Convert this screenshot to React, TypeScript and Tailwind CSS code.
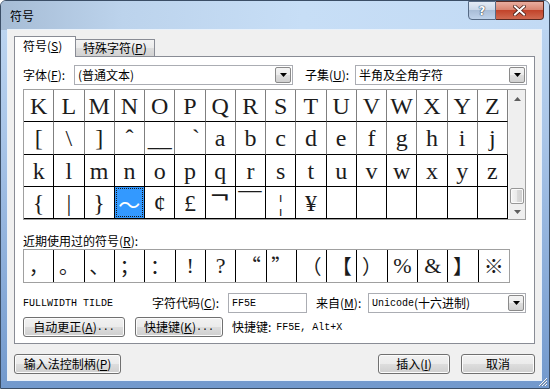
import React from 'react';

const CJK = "font-['Noto_Sans_CJK_SC',sans-serif]";
const MONO = "font-['Liberation_Mono',monospace]";
const SERIF = "font-['Liberation_Serif',serif]";

const BTN =
  'flex items-center justify-center h-[20px] rounded-[3px] border border-[#707070] bg-[linear-gradient(to_bottom,#f2f2f2,#ebebeb_50%,#dddddd_50%,#cfcfcf)] shadow-[inset_0_0_0_1px_#fcfcfc] text-[12px] text-black';

type Cell = { ch: string; cls?: string; font?: string };

const GRID: Cell[][] = [
  'KLMNOPQRSTUVWXYZ'.split('').map(ch => ({ ch })),
  [
    { ch: '[' }, { ch: '\\' }, { ch: ']' }, { ch: 'ˆ' }, { ch: '__' }, { ch: '`', cls: 'translate-x-[6px]' },
    ...'abcdefghij'.split('').map(ch => ({ ch })),
  ],
  'klmnopqrstuvwxyz'.split('').map(ch => ({ ch })),
  [
    { ch: '{' }, { ch: '|' }, { ch: '}' }, { ch: '～' }, { ch: '¢' }, { ch: '£' },
    { ch: '¬', cls: '-translate-y-[8px] scale-x-[1.4] font-bold' }, { ch: '¯', cls: '-translate-y-[2px] scale-x-[1.9]' },
    { ch: '¦' }, { ch: '¥' },
    { ch: '' }, { ch: '' }, { ch: '' }, { ch: '' }, { ch: '' }, { ch: '' },
  ],
];

const RECENT: Cell[] = [
  { ch: '，' }, { ch: '。' }, { ch: '、' }, { ch: '；' }, { ch: '：' },
  { ch: '!', font: 'serif' }, { ch: '?', font: 'serif' },
  { ch: '“' }, { ch: '”' }, { ch: '（' }, { ch: '【' }, { ch: '）' },
  { ch: '%', font: 'serif' }, { ch: '&', font: 'serif' }, { ch: '】' }, { ch: '※' },
];

function Mn({ k }: { k: string }) {
  return (
    <span>
      (<span className="underline underline-offset-[1px]">{k}</span>)
    </span>
  );
}

function DropBtn() {
  return (
    <div className="w-[16px] h-[16px] flex items-center justify-center rounded-[2px] border border-[#8a8a8a] bg-[linear-gradient(to_bottom,#f4f4f4,#ececec_50%,#dedede_50%,#d0d0d0)]">
      <svg width="7" height="4" viewBox="0 0 7 4">
        <path d="M0 0H7L3.5 4Z" fill="#000" />
      </svg>
    </div>
  );
}

function Combo({ w, children }: { w: string; children: React.ReactNode }) {
  return (
    <div className={`${w} h-[20px] flex items-center border border-[#abadb3] bg-white pl-[3px] pr-px`}>
      <div className="flex-1 flex items-center whitespace-nowrap overflow-hidden">{children}</div>
      <DropBtn />
    </div>
  );
}

function Arrow({ up }: { up?: boolean }) {
  return (
    <svg width="7" height="4" viewBox="0 0 7 4">
      <path d={up ? 'M0 4H7L3.5 0Z' : 'M0 0H7L3.5 4Z'} fill="#5e5e5e" />
    </svg>
  );
}

export default function App() {
  return (
    <div className={`w-[550px] h-[389px] bg-white overflow-hidden ${CJK} text-[12px] text-black`}>
      <div className="relative w-full h-full flex flex-col rounded-t-[6px] border border-[#3b4e66] bg-[linear-gradient(to_bottom,#c0d8f2,#a9c5e8_35%,#7299cd)]">
        {/* Title bar */}
        <div className="h-[29px] flex rounded-t-[5px] bg-[linear-gradient(to_right,#a6bcd5,#bcd3ec_22%,#c7def6_55%,#c2daf4)]">
          <span className="ml-[9px] self-center text-[12px] leading-none">符号</span>
          <div className="ml-auto mr-[5px] flex h-[19px]">
            <div className="w-[28px] h-full rounded-bl-[4px] border border-[#566a85] bg-[linear-gradient(to_bottom,#e4ecf6,#cbd9ea_45%,#a9bdd7_50%,#bfd2ea)] flex items-center justify-center">
              <span className="font-['DejaVu_Sans',sans-serif] text-[12px] font-bold leading-none text-white [text-shadow:0_0_1px_#34465e,0_0_1px_#34465e,0_0_1px_#34465e]">?</span>
            </div>
            <div className="w-[48px] h-full rounded-br-[4px] border border-l-0 border-[#5a2a22] bg-[linear-gradient(to_bottom,#e9ad9f,#d98672_45%,#c2442b_50%,#d06a51)] flex items-center justify-center">
              <svg width="13" height="11" viewBox="0 0 13 11">
                <path d="M2 1.5L11 9.5M11 1.5L2 9.5" stroke="#4a1f18" strokeWidth="3.6" strokeLinecap="square" />
                <path d="M2 1.5L11 9.5M11 1.5L2 9.5" stroke="#ffffff" strokeWidth="2" strokeLinecap="square" />
              </svg>
            </div>
          </div>
        </div>

        {/* Client area */}
        <div className="ml-[7px] w-[533px] h-[350px] flex flex-col bg-[#f0f0f0] shadow-[0_0_0_1px_#e9f1fa]">
          {/* Tabs */}
          <div className="relative z-10 flex items-end h-[21px] mt-[6px] ml-[6px] -mb-px">
            <div className="w-[62px] h-[21px] flex items-center pl-[8px] pb-[2px] bg-white border border-b-0 border-[#898c95]">
              符号<Mn k="S" />
            </div>
            <div className="w-[79px] h-[17px] mb-px flex items-center pl-[7px] border border-l-0 border-b-0 border-[#898c95] bg-[linear-gradient(to_bottom,#f3f3f3,#ebebeb_50%,#dddddd_50%,#d2d2d2)]">
              特殊字符<Mn k="P" />
            </div>
          </div>

          {/* Tab panel */}
          <div className="ml-[6px] w-[521px] h-[288px] flex flex-col pl-[8px] bg-white border border-[#898c95]">
            {/* Font / subset row */}
            <div className="mt-[8px] h-[20px] flex items-center">
              <span className="w-[51px]">字体<Mn k="F" />:</span>
              <Combo w="w-[219px]">(普通文本)</Combo>
              <span className="ml-[12px] w-[50px]">子集<Mn k="U" />:</span>
              <Combo w="w-[172px]">半角及全角字符</Combo>
            </div>

            {/* Symbol grid */}
            <div className="mt-[4px] w-[503px] h-[131px] flex border border-[#a0a0a0]">
              <div className="w-[484px] grid grid-cols-16">
                {GRID.map((row, r) =>
                  row.map((cell, c) => {
                    const sel = r === 3 && c === 3;
                    return (
                      <div
                        key={`${r}-${c}`}
                        className={`flex items-center justify-center border-r border-b border-b-black ${r < 2 ? 'border-r-[#7f7f7f]' : 'border-r-black'} ${r === 1 ? 'h-[33px]' : 'h-[32px]'} ${sel ? 'bg-[#3399ff] p-px' : ''}`}
                      >
                        {sel ? (
                          <div className="w-full h-full flex items-center justify-center border border-dotted border-[#1b1b1b]">
                            <span className={`${CJK} text-[22px] leading-none text-white`}>{cell.ch}</span>
                          </div>
                        ) : (
                          <span className={`${SERIF} text-[24px] leading-[32px] text-[#1c1c1c] ${cell.cls ?? ''}`}>{cell.ch}</span>
                        )}
                      </div>
                    );
                  })
                )}
              </div>
              {/* Scrollbar */}
              <div className="w-[17px] flex flex-col bg-[#efefef] border-l border-[#f7f7f7]">
                <div className="h-[17px] flex items-center justify-center">
                  <Arrow up />
                </div>
                <div className="flex-1" />
                <div className="mx-px h-[16px] rounded-[2px] border border-[#979797] bg-[linear-gradient(to_right,#f4f4f4,#e9e9e9_50%,#dadada_50%,#cdcdcd)] shadow-[inset_0_0_0_1px_#fafafa]" />
                <div className="h-[15px] flex items-center justify-center">
                  <Arrow />
                </div>
              </div>
            </div>

            {/* Recent symbols */}
            <div className="mt-[13px] h-[16px] leading-[16px]">
              近期使用过的符号<Mn k="R" />:
            </div>
            <div className="w-[487px] h-[34px] grid grid-cols-16 border border-[#a0a0a0]">
              {RECENT.map((cell, i) => (
                <div key={i} className={`flex items-center justify-center ${i < 15 ? 'border-r border-black' : ''}`}>
                  <span
                    className={
                      cell.font === 'serif'
                        ? `${SERIF} text-[22px] leading-none text-[#1c1c1c]`
                        : `${CJK} text-[20px] leading-none text-[#1c1c1c]`
                    }
                  >
                    {cell.ch}
                  </span>
                </div>
              ))}
            </div>

            {/* Name / code row */}
            <div className="mt-[10px] h-[20px] flex items-center">
              <span className={`${MONO} text-[10px] w-[129px]`}>FULLWIDTH TILDE</span>
              <span className="w-[76px]">字符代码<Mn k="C" />:</span>
              <div className={`w-[79px] h-[20px] flex items-center pl-[3px] border border-[#abadb3] bg-white ${MONO} text-[10px]`}>FF5E</div>
              <span className="ml-[9px] w-[52px]">来自<Mn k="M" />:</span>
              <Combo w="w-[158px]">
                <span className={`${MONO} text-[10px]`}>Unicode</span>
                <span>(十六进制)</span>
              </Combo>
            </div>

            {/* Buttons row */}
            <div className="mt-[4px] h-[20px] flex items-center">
              <button className={`${BTN} w-[102px]`}>
                自动更正<Mn k="A" />
                <span className={`${MONO} text-[10px]`}>...</span>
              </button>
              <button className={`${BTN} ml-[10px] w-[88px]`}>
                快捷键<Mn k="K" />
                <span className={`${MONO} text-[10px]`}>...</span>
              </button>
              <span className="ml-[9px]">快捷键:</span>
              <span className={`${MONO} text-[10px] ml-[5px]`}>FF5E, Alt+X</span>
            </div>
          </div>

          {/* Bottom buttons */}
          <div className="mt-[10px] h-[20px] flex items-center px-[6px]">
            <button className={`${BTN} w-[107px]`}>
              输入法控制柄<Mn k="P" />
            </button>
            <button className={`${BTN} ml-auto w-[72px] border-[#3c7fb1] shadow-[inset_0_0_0_1px_#bfe4f8]`}>
              插入<Mn k="I" />
            </button>
            <button className={`${BTN} ml-[11px] w-[74px]`}>取消</button>
          </div>
        </div>

        {/* Resize grip */}
        <svg className="absolute right-[1px] bottom-[1px]" width="12" height="12" viewBox="0 0 12 12">
          <path d="M11 3L3 11M11 6L6 11M11 9L9 11" stroke="#f4f7fb" strokeWidth="1" />
          <path d="M11 4L4 11M11 7L7 11M11 10L10 11" stroke="#7d8a9c" strokeWidth="1" />
        </svg>
      </div>
    </div>
  );
}
